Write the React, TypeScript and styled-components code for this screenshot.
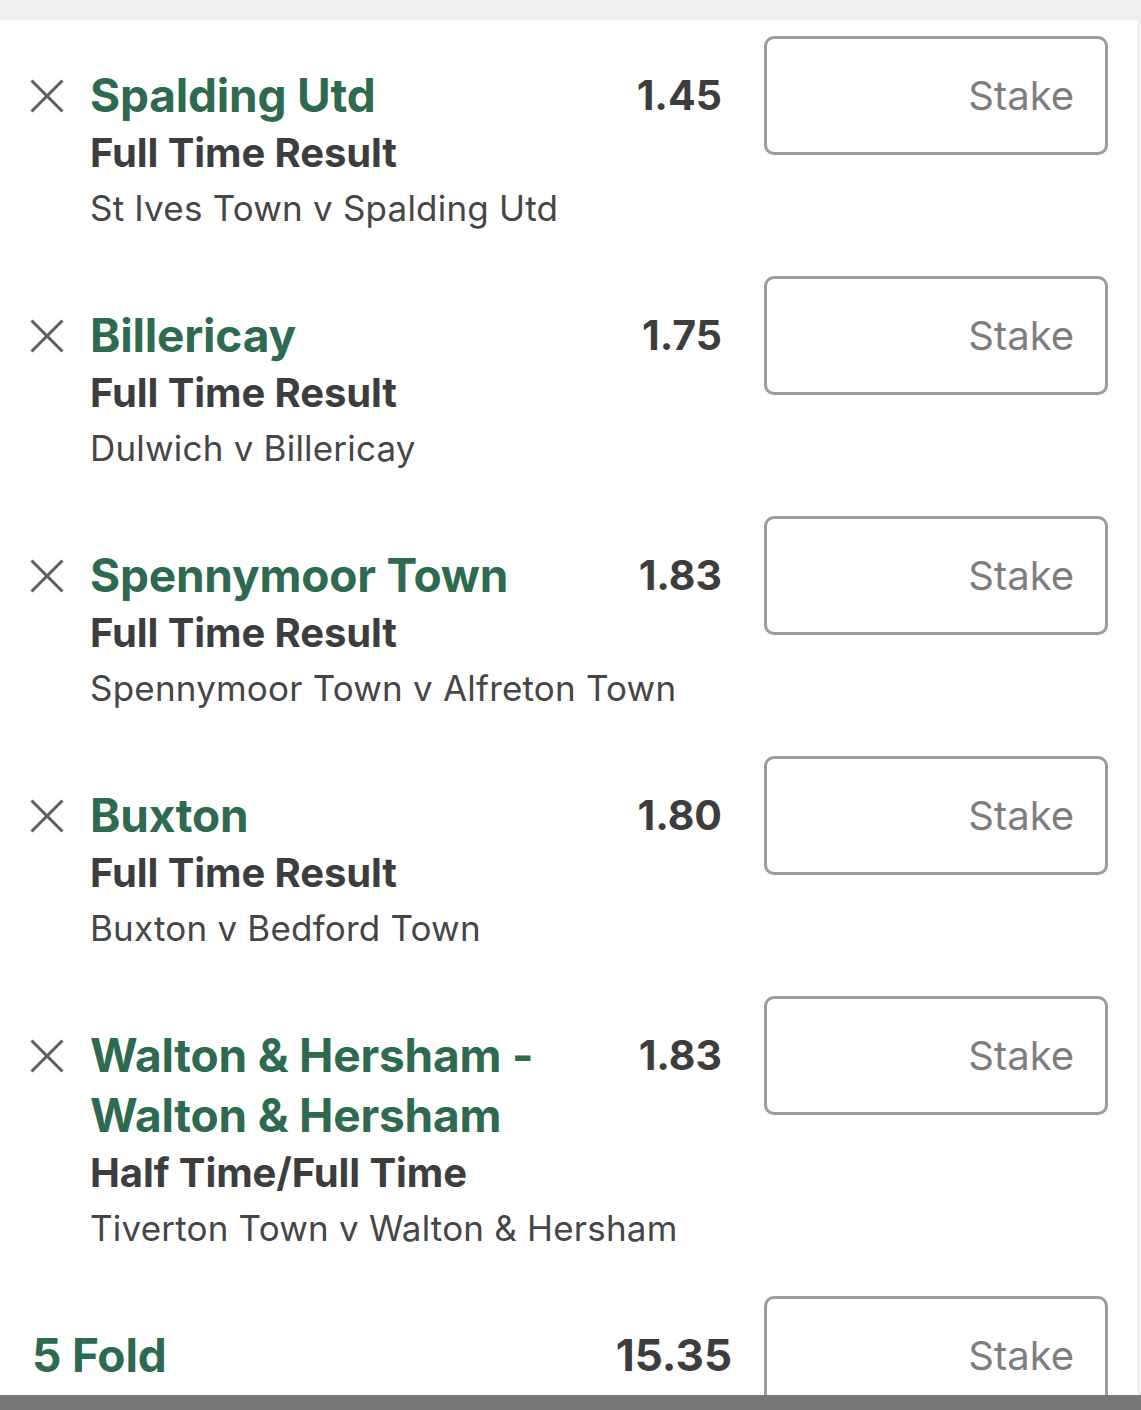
import React from "react";
import styled, { createGlobalStyle } from "styled-components";

const GlobalStyle = createGlobalStyle`
  html, body { margin: 0; padding: 0; background: #efefef; }
  body { font-family: Inter, "Noto Sans", "Liberation Sans", sans-serif; }
  * { box-sizing: border-box; }
`;

const Page = styled.div`
  width: 1141px;
  height: 1410px;
  display: flex;
  flex-direction: column;
  background: #efefef;
  overflow: hidden;
`;

const TopStrip = styled.div`
  height: 20px;
  flex: none;
`;

const Panel = styled.div`
  width: 1137px;
  height: 1375px;
  flex: none;
  background: #ffffff;
  overflow: hidden;
`;

const BottomBar = styled.div`
  height: 15px;
  flex: none;
  background: #777777;
`;

const Row = styled.div<{ $tall?: boolean }>`
  display: grid;
  grid-template-columns: 60px 1fr 110px 386px;
  grid-template-rows: auto auto auto;
  align-content: start;
  padding: 0 29px 0 30px;
  height: ${(p) => (p.$tall ? 300 : 240)}px;
`;

const Remove = styled.button`
  grid-column: 1;
  grid-row: 1;
  align-self: start;
  margin-top: 59px;
  width: 34px;
  height: 34px;
  padding: 0;
  border: none;
  background: none;
  display: flex;
`;

const Title = styled.div`
  grid-column: 2;
  grid-row: 1;
  margin-top: 45px;
  font-size: 46px;
  line-height: 60px;
  font-weight: 700;
  color: #2e6a4f;
  letter-spacing: -0.2px;
`;

const Odds = styled.div`
  grid-column: 3;
  grid-row: 1;
  justify-self: end;
  margin-top: 45px;
  font-size: 41px;
  line-height: 60px;
  font-weight: 700;
  color: #3d3d3d;
`;

const Market = styled.div`
  grid-column: 2 / 4;
  grid-row: 2;
  font-size: 40px;
  line-height: 56px;
  font-weight: 700;
  color: #3d3d3d;
  letter-spacing: -0.1px;
`;

const Event = styled.div`
  grid-column: 2 / 4;
  grid-row: 3;
  margin-top: -1px;
  font-size: 35px;
  line-height: 56px;
  font-weight: 400;
  color: #464646;
  letter-spacing: 0.2px;
`;

const StakeBox = styled.div`
  grid-column: 4;
  grid-row: 1 / 4;
  justify-self: end;
  align-self: start;
  margin-top: 16px;
  width: 344px;
  height: 119px;
  border: 3px solid #9c9c9c;
  border-radius: 10px;
  display: flex;
  align-items: center;
  justify-content: flex-end;
  padding-right: 31px;
  font-size: 40px;
  color: #7e7e7e;
  font-weight: 400;
`;

const FoldRow = styled.div`
  display: grid;
  grid-template-columns: 1fr auto 344px;
  align-items: start;
  column-gap: 32px;
  padding: 0 29px 0 32px;
  height: 240px;
`;

const FoldTitle = styled.div`
  margin-top: 45px;
  font-size: 46px;
  line-height: 60px;
  font-weight: 700;
  color: #2e6a4f;
  letter-spacing: -0.2px;
`;

const FoldOdds = styled(Odds)`
  grid-column: auto;
  grid-row: auto;
  font-size: 44px;
`;

const FoldStake = styled(StakeBox)`
  grid-column: auto;
  grid-row: auto;
`;

const CrossIcon = () => (
  <svg width="34" height="34" viewBox="0 0 34 34">
    <path d="M1.5 1.5 L32.5 32.5 M32.5 1.5 L1.5 32.5" stroke="#5c5c5c" strokeWidth="3" fill="none" />
  </svg>
);

type Bet = { selection: string; odds: string; market: string; event: string; tall?: boolean };

const bets: Bet[] = [
  { selection: "Spalding Utd", odds: "1.45", market: "Full Time Result", event: "St Ives Town v Spalding Utd" },
  { selection: "Billericay", odds: "1.75", market: "Full Time Result", event: "Dulwich v Billericay" },
  { selection: "Spennymoor Town", odds: "1.83", market: "Full Time Result", event: "Spennymoor Town v Alfreton Town" },
  { selection: "Buxton", odds: "1.80", market: "Full Time Result", event: "Buxton v Bedford Town" },
  {
    selection: "Walton & Hersham - Walton & Hersham",
    odds: "1.83",
    market: "Half Time/Full Time",
    event: "Tiverton Town v Walton & Hersham",
    tall: true,
  },
];

export default function App() {
  return (
    <Page>
      <GlobalStyle />
      <TopStrip />
      <Panel>
        {bets.map((b) => (
          <Row key={b.selection} $tall={b.tall}>
            <Remove aria-label="Remove">
              <CrossIcon />
            </Remove>
            <Title>{b.selection}</Title>
            <Odds>{b.odds}</Odds>
            <Market>{b.market}</Market>
            <Event>{b.event}</Event>
            <StakeBox>Stake</StakeBox>
          </Row>
        ))}
        <FoldRow>
          <FoldTitle>5 Fold</FoldTitle>
          <FoldOdds>15.35</FoldOdds>
          <FoldStake>Stake</FoldStake>
        </FoldRow>
      </Panel>
      <BottomBar />
    </Page>
  );
}
